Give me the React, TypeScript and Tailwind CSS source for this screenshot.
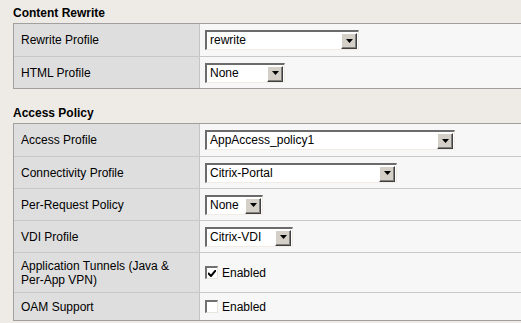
import React from 'react';

function Select({ value, width }: { value: string; width: number }) {
  return (
    <div
      className="flex h-[20px] items-stretch border-t-2 border-l-2 border-t-[#6b6b6b] border-l-[#6b6b6b] border-r border-b border-r-[#f0ebe4] border-b-[#f0ebe4] bg-white"
      style={{ width }}
    >
      <span className="flex-1 pl-[3px] leading-[17px] text-[12px] text-black">{value}</span>
      {/* arrow button */}
      <span className="my-[1px] mr-[1px] flex h-[16px] w-[16px] items-center justify-center border border-t-white border-l-white border-r-[#404040] border-b-[#404040] bg-[#d4d0c8] shadow-[inset_-1px_-1px_0_#808080]">
        <svg width="7" height="5" viewBox="0 0 7 5">
          <path d="M0 0h7L3.5 4z" fill="#000" />
        </svg>
      </span>
    </div>
  );
}

function Checkbox({ checked }: { checked?: boolean }) {
  return (
    <span className="flex h-[13px] w-[13px] items-center justify-center border-t-2 border-l-2 border-t-[#707070] border-l-[#707070] border-r border-b border-r-[#e8e4de] border-b-[#e8e4de] bg-white">
      {checked && (
        <svg width="8" height="7" viewBox="0 0 8 7">
          <path d="M0 3l3 3 5-6" stroke="#000" strokeWidth="2" fill="none" />
        </svg>
      )}
    </span>
  );
}

function Row({ label, children, h }: { label: React.ReactNode; children: React.ReactNode; h: string }) {
  return (
    <div className={`grid grid-cols-[186px_1fr] border-t border-[#c8c8c8] first:border-t-0 ${h}`}>
      <div className="flex items-center border-r border-[#c4c4c4] bg-[#dedede] pl-[7px] text-[12px] leading-[14px] text-black">
        {label}
      </div>
      <div className="flex items-center gap-[4px] bg-[#f7f7f7] pl-[5px] text-[12px] text-black">{children}</div>
    </div>
  );
}

function Section({ title, children }: { title: string; children: React.ReactNode }) {
  return (
    <div>
      <div className="mb-[3px] h-[14px] pl-[13px] text-[12px] font-bold leading-[14px] text-black">{title}</div>
      <div className="ml-[13px] border-y border-l border-[#a0a0a0]">{children}</div>
    </div>
  );
}

export default function App() {
  return (
    <div
      className="h-[323px] w-[521px] overflow-hidden bg-[#eeebe6] pt-[6px]"
      style={{ fontFamily: '"Liberation Sans", Arial, sans-serif' }}
    >
      <Section title="Content Rewrite">
        <Row label="Rewrite Profile" h="h-[32px]">
          <Select value="rewrite" width={154} />
        </Row>
        <Row label="HTML Profile" h="h-[32px]">
          <Select value="None" width={80} />
        </Row>
      </Section>

      <div className="h-[17px]" />

      <Section title="Access Policy">
        <Row label="Access Profile" h="h-[32px]">
          <Select value="AppAccess_policy1" width={250} />
        </Row>
        <Row label="Connectivity Profile" h="h-[32px]">
          <Select value="Citrix-Portal" width={192} />
        </Row>
        <Row label="Per-Request Policy" h="h-[32px]">
          <Select value="None" width={58} />
        </Row>
        <Row label="VDI Profile" h="h-[32px]">
          <Select value="Citrix-VDI" width={88} />
        </Row>
        <Row label={<span>Application Tunnels (Java &amp;<br />Per-App VPN)</span>} h="h-[40px]">
          <Checkbox checked />
          <span>Enabled</span>
        </Row>
        <Row label="OAM Support" h="h-[28px]">
          <Checkbox />
          <span>Enabled</span>
        </Row>
      </Section>
    </div>
  );
}
